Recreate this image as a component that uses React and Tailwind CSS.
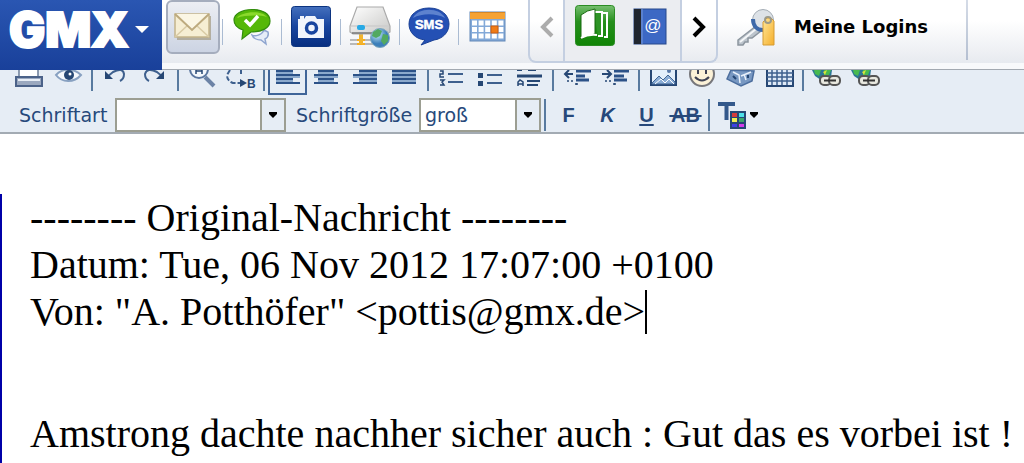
import React from 'react';

const MailIcon = () => (
  <svg width="38" height="28" viewBox="0 0 38 28" aria-hidden="true">
    <rect x="3" y="3" width="34" height="24" fill="#a39a82" opacity=".7" />
    <rect x="1" y="1" width="34" height="23" fill="#f6eed3" stroke="#c4b48b" strokeWidth="1.5" />
    <path d="M1 24L14 12M35 24L22 12" stroke="#d9cba5" strokeWidth="1.5" fill="none" />
    <path d="M1 1L18 17L35 1" fill="#fbf6e4" stroke="#bdaa7e" strokeWidth="2" />
  </svg>
);

const ChatIcon = () => (
  <svg width="38" height="38" viewBox="0 0 38 38" aria-hidden="true">
    <path d="M19 27C22 29 29 27 31 22L35 24C36 28 34 30 32 31L33 36L28 32C24 32 20 30 19 27Z" fill="#e6edf8" stroke="#8fa5cf" strokeWidth="1.500" />
    <path d="M19 1.500C30 1.500 37 6 37 13C37 20 29 24 18 24L9 31L10 22C4 20 1 17 1 12C1 6 9 1.500 19 1.500Z" fill="#55b808" stroke="#328c0d" strokeWidth="1.200" />
    <path d="M4 10C7 4 28 1 34 9C27 7 12 7 4 10Z" fill="#8bd92c" />
    <path d="M12 12L17 17L25 8" fill="none" stroke="#fff" strokeWidth="3.500" />
  </svg>
);

const CameraIcon = () => (
  <svg width="40" height="42" viewBox="0 0 40 42" aria-hidden="true">
    <defs>
      <linearGradient id="cam" x1="0" y1="0" x2="0" y2="1">
        <stop offset="0" stopColor="#4470bd" />
        <stop offset=".5" stopColor="#18459f" />
        <stop offset="1" stopColor="#082f80" />
      </linearGradient>
    </defs>
    <rect x=".5" y=".5" width="39" height="40" rx="3" fill="url(#cam)" stroke="#0c3480" />
    <path d="M7 13H13L15 10H24L26 13H33V32H7Z" fill="#f1f5fc" />
    <rect x="9" y="10" width="4" height="3" fill="#f1f5fc" />
    <circle cx="20.500" cy="22" r="5" fill="none" stroke="#18459f" strokeWidth="3.500" />
  </svg>
);

const DriveIcon = () => (
  <svg width="42" height="42" viewBox="0 0 42 42" aria-hidden="true">
    <defs>
      <linearGradient id="drive" x1="0" y1="0" x2="1" y2="1">
        <stop offset="0" stopColor="#fff" />
        <stop offset="1" stopColor="#c8c8c6" />
      </linearGradient>
      <radialGradient id="globe" cx=".35" cy=".3">
        <stop offset="0" stopColor="#c8edf8" />
        <stop offset="1" stopColor="#3c7fba" />
      </radialGradient>
    </defs>
    <path d="M1 34H26M1 38H24" stroke="#a5a5a5" strokeWidth="1.500" />
    <path d="M8 34H16M8 38H16" stroke="#f5ad20" strokeWidth="2" />
    <path d="M12 28V38" stroke="#f2b42d" strokeWidth="4" />
    <path d="M8 1H34L41 20V26L38 28H4L1 26V20Z" fill="url(#drive)" stroke="#aaa" strokeWidth="1.200" />
    <path d="M2 20H40" stroke="#ccc" strokeWidth="1.500" />
    <path d="M3 27H38" stroke="#777" strokeWidth="1.500" />
    <rect x="8" y="19" width="8" height="5" rx="2" fill="#28a9e5" />
    <circle cx="31" cy="32" r="9.500" fill="url(#globe)" stroke="#7ba6bd" />
    <path d="M24 26L29 23L33 25L31 30L27 32L23 30ZM34 28L39 29V35L35 39L32 35Z" fill="#52a960" />
  </svg>
);

const SmsIcon = () => (
  <svg width="42" height="40" viewBox="0 0 42 40" aria-hidden="true">
    <path d="M21 1C33 1 41 8 41 17C41 26 34 32 26 33L13 38L17 33C7 32 1 25 1 17C1 8 9 1 21 1Z" fill="#2450b4" stroke="#183f95" />
    <path d="M5 11C10 0 32 0 37 11C28 6 14 6 5 11Z" fill="#5d82ce" />
    <text x="21" y="22" textAnchor="middle" fill="#fff" stroke="#fff" strokeWidth=".5" fontFamily="Liberation Sans, Arial, sans-serif" fontWeight="700" fontSize="13">SMS</text>
  </svg>
);

const CalendarIcon = () => {
  const cells = [];
  for (let r = 0; r < 3; r++) {
    for (let c = 0; c < 5; c++) {
      cells.push(
        <rect key={`${r}-${c}`} x={3 + c * 6.6} y={9.5 + r * 6.5} width="5" height="5" fill="#fff" />
      );
    }
  }
  return (
    <svg width="38" height="32" viewBox="0 0 38 32" aria-hidden="true">
      <rect x="1" y="1" width="35" height="29" fill="#83a9d8" stroke="#6288b8" />
      <rect x="1" y="1" width="35" height="7" fill="#f5a234" />
      <path d="M1 1.500H36" stroke="#d38628" />
      {cells}
      <rect x="22" y="15" width="7" height="7" fill="#f07c17" stroke="#c95d10" />
    </svg>
  );
};

const PagesIcon = () => (
  <svg width="40" height="42" viewBox="0 0 40 42" aria-hidden="true">
    <defs>
      <linearGradient id="pages" x1="0" y1="0" x2="0" y2="1">
        <stop offset="0" stopColor="#76bf70" />
        <stop offset=".4" stopColor="#268f1d" />
        <stop offset="1" stopColor="#118506" />
      </linearGradient>
    </defs>
    <rect x=".5" y=".5" width="39" height="40" rx="3" fill="url(#pages)" stroke="#2b8c24" />
    <path d="M24 8H32V32H29" fill="none" stroke="#fff" strokeWidth="2" />
    <path d="M19 7H27V31H23" fill="#2e9426" stroke="#fff" strokeWidth="2" />
    <path d="M6 10Q12 5 20 4V29Q12 30 6 34Z" fill="#fff" stroke="#17690f" />
    <path d="M6 33Q13 29 22 30" fill="none" stroke="#fff" strokeWidth="2" />
  </svg>
);

const AddressBookIcon = () => (
  <svg width="34" height="37" viewBox="0 0 34 37" aria-hidden="true">
    <rect x="1" y="1" width="32" height="35" fill="#3c68c4" stroke="#26488c" />
    <rect x="1" y="1" width="7" height="35" fill="#20262f" />
    <path d="M9 1V36" stroke="#7699da" />
    <text x="20" y="23" textAnchor="middle" fill="#fff" fontFamily="Liberation Sans, Arial, sans-serif" fontSize="17">@</text>
  </svg>
);

const KeyIcon = () => (
  <svg width="40" height="40" viewBox="0 0 40 40" aria-hidden="true">
    <defs>
      <linearGradient id="tag" x1="0" y1="0" x2="1" y2="1">
        <stop offset="0" stopColor="#ffe799" />
        <stop offset="1" stopColor="#f5ae2a" />
      </linearGradient>
    </defs>
    <path d="M20 18L2 32V37H7L9 34H12V30H16L25 23Z" fill="#bcc4cc" stroke="#8c959e" strokeWidth="1.500" />
    <path d="M4 34L20 21" stroke="#f4f6f8" strokeWidth="2" />
    <circle cx="27" cy="12" r="10.500" fill="#dde2e7" stroke="#a4adb5" />
    <path d="M17 11C17 18 21 22 27 22" fill="none" stroke="#3e69a9" strokeWidth="4" />
    <path d="M28 13L31 10H35L38 13V37H27V14Z" fill="url(#tag)" stroke="#d59b32" />
    <circle cx="32" cy="12" r="3" fill="none" stroke="#9b9989" strokeWidth="2" />
  </svg>
);

const Arrow = ({ d }) => (
  <svg width="14" height="22" viewBox="0 0 14 22" aria-hidden="true">
    <path d={d} fill="none" stroke="currentColor" strokeWidth="4" />
  </svg>
);

const services = [
  { id: 'chat', label: 'Chat', icon: ChatIcon },
  { id: 'photo', label: 'Fotoalbum', icon: CameraIcon },
  { id: 'drive', label: 'MediaCenter', icon: DriveIcon },
  { id: 'sms', label: 'SMS', icon: SmsIcon },
  { id: 'calendar', label: 'Kalender', icon: CalendarIcon },
];

const lines = (rows) => rows.map(([x1, x2, y]) => `M${x1} ${y}H${x2}`).join('');

const Bars = ({ rows }) => (
  <>
    <path d={lines(rows.slice(0, 3).map(([a, b, y]) => [a, b, y + 2]))} stroke="#8ba9cc" strokeWidth="2" />
    <path d={lines(rows)} stroke="#2c5288" strokeWidth="2" />
  </>
);

const GlobeLink = () => (
  <>
    <path d="M5 0H25L24 7L17 12L8 6Z" fill="#2b7796" />
    <path d="M7 0H14L12 6L8 4ZM17 0H24L22 5L17 7Z" fill="#48ba50" />
    <path d="M16 2L20 0L18 5Z" fill="#d8e33b" />
    <rect x="13" y="6" width="11" height="9" rx="4" fill="#e8e8df" stroke="#555" strokeWidth="2" />
    <rect x="22" y="6" width="11" height="9" rx="4" fill="#e8e8df" stroke="#555" strokeWidth="2" />
    <path d="M17 10.500H29" stroke="#333" strokeWidth="2" />
  </>
);

const tools = [
  [
    { label: 'Drucken', art: (
      <>
        <path d="M9 0V7H28V0" fill="#fff" stroke="#6a7c98" strokeWidth="1.500" />
        <path d="M6 7H32V16H6Z" fill="#9aa8bf" stroke="#4b6289" strokeWidth="2" />
        <path d="M8 10H30" stroke="#e8eef6" strokeWidth="2" />
      </>
    ) },
    { label: 'Vorschau', art: (
      <>
        <path d="M7 5C13-2 25-2 32 5C25 13 13 13 7 5Z" fill="#f5f9fd" stroke="#88a1c1" strokeWidth="2" />
        <circle cx="20" cy="5" r="5" fill="#264774" />
        <circle cx="21" cy="4" r="1.500" fill="#fff" />
      </>
    ) },
  ],
  [
    { label: 'Rückgängig', art: (
      <>
        <path d="M11 7L17 2Q27-3 28 4Q28 9 24 11" fill="none" stroke="#3e608e" strokeWidth="2" />
        <path d="M9 1V9H17Z" fill="#264774" />
      </>
    ) },
    { label: 'Wiederholen', art: (
      <>
        <path d="M28 7L22 2Q12-3 10 4Q10 9 14 11" fill="none" stroke="#3e608e" strokeWidth="2" />
        <path d="M29 1V9H21Z" fill="#264774" />
      </>
    ) },
  ],
  [
    { label: 'Suchen', art: (
      <>
        <path d="M23 7L32 16" stroke="#6c83a6" strokeWidth="4" />
        <circle cx="17" cy="-1" r="9" fill="#f4f8fc" stroke="#5a769f" strokeWidth="2" />
        <path d="M14 0V4M20 0V4M14 1H20" stroke="#264774" strokeWidth="1.500" />
      </>
    ) },
    { label: 'Ersetzen', art: (
      <>
        <path d="M9 0L6 5Q6 11 12 13H20M20 0V4" fill="none" stroke="#3e608e" strokeWidth="2" strokeDasharray="5 2" />
        <path d="M19 9L26 13L19 17Z" fill="#264774" />
        <text x="26" y="18" fill="#264774" fontFamily="Liberation Sans, Arial, sans-serif" fontWeight="700" fontSize="12">B</text>
      </>
    ) },
  ],
  [
    { label: 'Linksbündig', active: true, art: <Bars rows={[[8, 25, 1], [8, 32, 5], [8, 25, 9], [8, 32, 13]]} /> },
    { label: 'Zentriert', art: <Bars rows={[[11, 27, 1], [7, 31, 5], [11, 27, 9], [7, 31, 13]]} /> },
    { label: 'Rechtsbündig', art: <Bars rows={[[13, 31, 1], [7, 31, 5], [13, 31, 9], [7, 31, 13]]} /> },
    { label: 'Blocksatz', art: <Bars rows={[[7, 31, 1], [7, 31, 5], [7, 31, 9], [7, 31, 13]]} /> },
  ],
  [
    { label: 'Nummerierte Liste', art: (
      <>
        <path d="M16 4H31M16 12H31" stroke="#3e608e" strokeWidth="2" />
        <path d="M8 1H11V4H8V7H12M8 10H12L10 12L12 15H8" fill="none" stroke="#264774" strokeWidth="1.500" />
      </>
    ) },
    { label: 'Aufzählung', art: (
      <>
        <path d="M16 5H31M16 13H31" stroke="#3e608e" strokeWidth="2" />
        <path d="M7 3H12V8H7ZM7 11H12V16H7Z" fill="#264774" />
      </>
    ) },
    { label: 'Trennlinie', art: (
      <>
        <path d="M7 0H12M18 0H26" stroke="#264774" strokeWidth="2" />
        <path d="M7 6H32" stroke="#264774" strokeWidth="3" />
        <path d="M17 11H30M17 15H28" stroke="#264774" strokeWidth="2" />
        <path d="M8 16V12L10 10L13 12V16M8 14H13" fill="none" stroke="#264774" strokeWidth="1.500" />
      </>
    ) },
  ],
  [
    { label: 'Einzug verkleinern', art: (
      <>
        <path d="M19 1H34M19 6H28M19 10H32" stroke="#2c5288" strokeWidth="3" />
        <path d="M8 4H16M12 0L8 4L12 8" fill="none" stroke="#264774" strokeWidth="2" />
        <path d="M10 11H16M19 13V17M19 14H22" stroke="#264774" strokeWidth="1.500" strokeDasharray="2 2" />
      </>
    ) },
    { label: 'Einzug vergrößern', art: (
      <>
        <path d="M18 1H33M18 6H28M18 10H31" stroke="#2c5288" strokeWidth="3" />
        <path d="M6 4H14M11 0L15 4L11 8" fill="none" stroke="#264774" strokeWidth="2" />
        <path d="M9 11H15M18 13V17M18 14H21" stroke="#264774" strokeWidth="1.500" strokeDasharray="2 2" />
      </>
    ) },
  ],
  [
    { label: 'Bild', art: (
      <>
        <path d="M8-2H33V15H8Z" fill="#e3effb" stroke="#264774" strokeWidth="2" />
        <path d="M9 13L16 6L20 10L25 5L32 12V14H9Z" fill="#8caed6" stroke="#426795" />
        <path d="M12 14L18 9L22 13L26 9L31 14" stroke="#fff" fill="none" />
        <circle cx="26" cy="1" r="2" fill="#5879a8" />
      </>
    ) },
    { label: 'Smiley', art: (
      <>
        <circle cx="20" cy="4" r="12" fill="#fbf1d7" stroke="#77777b" strokeWidth="2" />
        <path d="M13 7Q20 14 27 7" fill="none" stroke="#3e4254" strokeWidth="2" />
        <path d="M16 0V4M24 0V4" stroke="#3e4254" strokeWidth="2" />
      </>
    ) },
    { label: 'Sonderzeichen', art: (
      <>
        <path d="M10 0L33 1L31 11L20 16L6 9Z" fill="#7898c2" stroke="#4c6e9e" strokeWidth="1.500" />
        <path d="M12 2L18 5L19 13M20 6L30 2M23 4L25 10" stroke="#e8f0fa" strokeWidth="1.500" fill="none" />
        <path d="M12 6L15 9M27 5V8" stroke="#264774" strokeWidth="2" />
      </>
    ) },
    { label: 'Tabelle', art: (
      <>
        <path d="M7-1H33V16H7Z" fill="#dfeaf7" stroke="#264774" strokeWidth="2" />
        <path d="M12 0V15M17 0V15M22 0V15M27 0V15M7 3H33M7 7H33M7 11H33" stroke="#3e608e" strokeWidth="1.500" />
      </>
    ) },
  ],
  [
    { label: 'Link einfügen', art: <GlobeLink /> },
    { label: 'Link entfernen', art: <GlobeLink /> },
  ],
];

const Caret = () => (
  <svg width="8" height="6" viewBox="0 0 8 6" aria-hidden="true">
    <path d="M0 0H8V2L4 6L0 2Z" fill="#000" />
  </svg>
);

const Combo = ({ id, className, children }) => (
  <div className={`relative h-[34px] ${className}`}>
    <select id={id} className="w-full h-full appearance-none bg-white border-2 border-[#9c9e92] pl-1 text-[19px] leading-6 text-[#27497b]">
      {children}
    </select>
    <span className="absolute inset-y-0 right-0 w-[26px] flex items-center justify-center bg-[#e6edf5] border-2 border-[#9c9e92] pointer-events-none">
      <Caret />
    </span>
  </div>
);

const Separator = () => <span className="w-px h-[26px] bg-[#aabbd2]" />;

const Header = () => (
  <header className="flex h-[70px] border-b border-[#a3a9b1] bg-gradient-to-b from-white from-30% to-[#e4e7ed]">
    <button className="w-[162px] shrink-0 flex items-center bg-gradient-to-b from-[#2a56b2] to-[#19409a] pl-[9px] pb-[11px] -mb-px text-white">
      <span className="w-[126px] text-left font-['Inter',sans-serif] font-black text-5xl leading-[58px] [-webkit-text-stroke:2px_white]">GMX</span>
      <svg width="14" height="8" viewBox="0 0 14 8" aria-hidden="true">
        <path d="M0 0H14L7 7Z" fill="#fff" />
      </svg>
    </button>
    <div className="grow flex border-b-[6px] border-[#f8f9fb]">
      <button aria-label="E-Mail" className="w-[54px] h-[54px] ml-1 mr-0.5 shrink-0 flex items-center justify-center rounded-md border-2 border-[#a5adbd] bg-gradient-to-b from-[#eceef3] to-[#ccd4e3]">
        <MailIcon />
      </button>
      {services.map(({ id, label, icon: Icon }) => (
        <div key={id} className="w-[59px] shrink-0 flex items-center">
          <Separator />
          <button aria-label={label} className="grow h-[54px] mb-[10px] flex items-center justify-center">
            <Icon />
          </button>
        </div>
      ))}
      <div className="w-[190px] h-[63px] ml-[11px] shrink-0 flex rounded-b-lg border-2 border-t-0 border-[#c4cfe1]">
        <button aria-label="Zurück" className="w-[33px] pb-2 flex items-center justify-center text-[#acacac]">
          <Arrow d="M12 2L3 11L12 20" />
        </button>
        <div className="w-[119px] flex items-center gap-[18px] pl-[10px] pb-[9px] border-x-2 border-[#c4cfe1] bg-[#ebedf1]">
          <button aria-label="Zeitung"><PagesIcon /></button>
          <button aria-label="Adressbuch"><AddressBookIcon /></button>
        </div>
        <button aria-label="Weiter" className="grow pb-2 flex items-center justify-center text-black">
          <Arrow d="M2 2L11 11L2 20" />
        </button>
      </div>
      <a href="#logins" className="flex items-center h-14 ml-[18px] text-black">
        <KeyIcon />
        <span className="ml-[18px] pb-0.5 font-['DejaVu_Sans',sans-serif] font-bold text-lg leading-6 whitespace-nowrap">Meine Logins</span>
      </a>
      <span className="w-0.5 h-[60px] ml-[38px] bg-gradient-to-b from-[#d5dce7] to-[#b4bfd1]" />
    </div>
  </header>
);

const Toolbar = () => (
  <div className="h-16 bg-[#e6edf5] border-b-2 border-[#a3abb3] text-[#27497b] font-['DejaVu_Sans',sans-serif]">
    <div className="flex h-[25px] pl-[10px]">
      {tools.map((group, i) => (
        <React.Fragment key={group[0].label}>
          {i > 0 && <span className="w-2 shrink-0 flex justify-center"><span className="w-0.5 h-[21px] bg-[#587a9f]" /></span>}
          {group.map((tool) => (
            <button
              key={tool.label}
              aria-label={tool.label}
              className={`w-[39px] h-[25px] shrink-0 overflow-hidden ${tool.active ? 'pl-px border-x-2 border-b-2 border-[#3f6599]' : ''}`}
            >
              <svg className={tool.active ? '-ml-[3px]' : ''} width="39" height="25" viewBox="0 0 39 25" aria-hidden="true">{tool.art}</svg>
            </button>
          ))}
        </React.Fragment>
      ))}
    </div>
    <div className="flex items-center h-9 pt-[3px] pl-[19px] text-[19px] leading-6">
      <label htmlFor="font" className="w-24 shrink-0">Schriftart</label>
      <Combo id="font" className="w-[171px] shrink-0">
        <option value="" />
      </Combo>
      <label htmlFor="size" className="w-[133px] pl-[10px] shrink-0">Schriftgröße</label>
      <Combo id="size" className="w-[122px] shrink-0">
        <option>groß</option>
      </Combo>
      <span className="w-0.5 h-8 ml-[3px] shrink-0 bg-[#587a9f]" />
      <div className="flex font-['Liberation_Sans',sans-serif] font-bold text-xl leading-6">
        <button className="w-[39px] ml-[3px]">F</button>
        <button className="w-[39px] italic">K</button>
        <button className="w-[39px] underline underline-offset-2">U</button>
        <button className="w-[39px] line-through whitespace-pre">{'\u200aAB\u200a'}</button>
      </div>
      <span className="w-0.5 h-8 ml-[3px] shrink-0 bg-[#587a9f]" />
      <button aria-label="Textfarbe" className="ml-2 flex items-center gap-1">
        <svg width="28" height="28" viewBox="0 0 28 28" aria-hidden="true">
          <path d="M0 3H17M8.500 3V19" stroke="#34598b" strokeWidth="4" />
          <rect x="12" y="10" width="16" height="18" fill="#264774" />
          <path d="M14 12H19V16H14Z" fill="#d53b3b" />
          <path d="M21 12H26V16H21Z" fill="#4de0e8" />
          <path d="M14 17H19V21H14Z" fill="#f2ee55" />
          <path d="M21 17H26V21H21Z" fill="#3ba66a" />
          <path d="M14 23H19V26H14Z" fill="#3d40e5" />
          <path d="M21 23H26V26H21Z" fill="#d43bec" />
        </svg>
        <Caret />
      </button>
    </div>
  </div>
);

const Message = () => (
  <main
    role="textbox"
    aria-label="Nachricht"
    className="grow mt-[60px] pl-7 border-l-2 border-[#0000a8] font-['Liberation_Serif',serif] text-[40px] leading-[47px] text-black whitespace-nowrap overflow-hidden"
  >
    <p>-------- Original-Nachricht --------</p>
    <p>Datum: Tue, 06 Nov 2012 17:07:00 +0100</p>
    <p className="flex">
      Von: "A. Potthöfer" &lt;pottis@gmx.de&gt;
      <span className="w-0.5 h-11 mt-0.5 bg-black" />
    </p>
    <p className="mt-[75px]">Amstrong dachte nachher sicher auch : Gut das es vorbei ist !</p>
  </main>
);

const App = () => (
  <div className="min-h-screen flex flex-col bg-white overflow-hidden">
    <Header />
    <Toolbar />
    <Message />
  </div>
);

export default App;
